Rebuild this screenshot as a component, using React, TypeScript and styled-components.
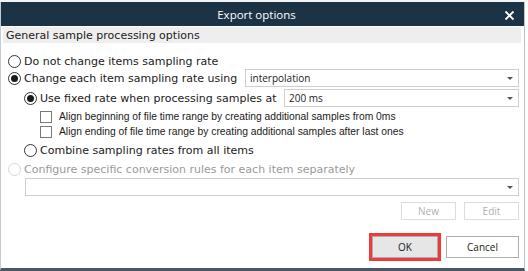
import React from "react";
import styled, { createGlobalStyle } from "styled-components";

const GlobalStyle = createGlobalStyle`
  html, body {
    margin: 0;
    padding: 0;
    background: #ffffff;
  }
  body {
    width: 528px;
    height: 271px;
    overflow: hidden;
    font-family: "DejaVu Sans", Verdana, sans-serif;
  }
`;

const Page = styled.div`
  width: 528px;
  height: 271px;
  display: flex;
  flex-direction: column;
  background: #ffffff;
`;

const BehindStrip = styled.div`
  height: 2px;
  background: #f4f4f4;
`;

const Window = styled.div`
  flex: 1;
  display: flex;
  flex-direction: column;
  width: 525px;
  border-left: 1px solid #c3ccd4;
  border-right: 1px solid #b9c2ca;
  border-bottom: 3px solid #4a5663;
  box-sizing: border-box;
`;

const TitleBar = styled.div`
  height: 24px;
  background: #1c3346;
  color: #ffffff;
  display: flex;
  align-items: center;
  justify-content: center;
  padding-right: 12px;
  position: relative;
  font-family: "Open Sans", "Noto Sans", sans-serif;
  font-size: 11.5px;
`;

const CloseButton = styled.div`
  position: absolute;
  right: 9px;
  top: 7px;
  width: 11px;
  height: 11px;
`;

const SectionHeader = styled.div`
  margin: 1px 3px 0 2px;
  height: 16px;
  background: #eeeeee;
  padding-left: 3px;
  display: flex;
  align-items: center;
  font-size: 11px;
  color: #1a1a1a;
`;

const Body = styled.div`
  flex: 1;
  display: flex;
  flex-direction: column;
  padding: 10px 5px 0 7px;
`;

const Row = styled.div<{ $indent?: number; $height?: number }>`
  display: flex;
  align-items: center;
  height: ${(p) => p.$height ?? 16}px;
  padding-left: ${(p) => p.$indent ?? 0}px;
`;

const Radio = styled.span<{ $checked?: boolean; $disabled?: boolean }>`
  width: 11px;
  height: 11px;
  border-radius: 50%;
  border: 1px solid ${(p) => (p.$disabled ? "#d5d5d5" : "#333333")};
  background: #ffffff;
  display: inline-flex;
  align-items: center;
  justify-content: center;
  flex-shrink: 0;
  margin-right: 3px;
  &::after {
    content: "";
    display: ${(p) => (p.$checked ? "block" : "none")};
    width: 7px;
    height: 7px;
    border-radius: 50%;
    background: #1a1a1a;
  }
`;

const Label = styled.span<{ $disabled?: boolean }>`
  font-size: 11px;
  color: ${(p) => (p.$disabled ? "#9a9a9a" : "#1a1a1a")};
  white-space: nowrap;
`;

const Checkbox = styled.span`
  width: 10px;
  height: 10px;
  border: 1px solid #7a7a7a;
  background: #ffffff;
  flex-shrink: 0;
  margin-right: 7px;
`;

const SmallLabel = styled.span`
  font-family: "Liberation Sans", Arial, sans-serif;
  font-size: 10.3px;
  color: #1a1a1a;
  white-space: nowrap;
`;

const Select = styled.div<{ $width: number }>`
  margin-left: auto;
  width: ${(p) => p.$width}px;
  height: 18px;
  box-sizing: border-box;
  border: 1px solid #cfcfcf;
  background: #ffffff;
  display: flex;
  align-items: center;
  padding-left: 4px;
  font-family: "Open Sans", "Noto Sans", sans-serif;
  font-size: 10px;
  color: #1a1a1a;
`;

const SelectText = styled.span`
  flex: 1;
`;

const Caret = styled.span`
  width: 16px;
  display: flex;
  justify-content: center;
  &::after {
    content: "";
    border-left: 3px solid transparent;
    border-right: 3px solid transparent;
    border-top: 3px solid #555555;
  }
`;

const ButtonRow = styled.div<{ $top: number }>`
  display: flex;
  justify-content: flex-end;
  gap: 8px;
  margin-top: ${(p) => p.$top}px;
`;

const Button = styled.div<{ $disabled?: boolean; $primary?: boolean }>`
  width: ${(p) => (p.$primary ? 66 : 73)}px;
  height: ${(p) => (p.$disabled ? 18 : 22)}px;
  box-sizing: border-box;
  display: flex;
  align-items: center;
  justify-content: center;
  font-family: "Open Sans", "Noto Sans", sans-serif;
  font-size: 10px;
  color: ${(p) => (p.$disabled ? "#b0b0b0" : "#1a1a1a")};
  background: ${(p) => (p.$primary ? "#e6e6e6" : "#ffffff")};
  border: 1px solid ${(p) => (p.$disabled ? "#dcdcdc" : "#adadad")};
  outline: ${(p) => (p.$primary ? "3px solid #ee3a3a" : "none")};
  outline-offset: 0px;
`;

const NarrowButton = styled(Button)`
  width: 55px;
`;

const App: React.FC = () => {
  return (
    <Page>
      <GlobalStyle />
      <BehindStrip />
      <Window>
        <TitleBar>
          Export options
          <CloseButton>
            <svg width="11" height="11" viewBox="0 0 11 11">
              <path
                d="M1.5 1.5 L9.5 9.5 M9.5 1.5 L1.5 9.5"
                stroke="#ffffff"
                strokeWidth="1.8"
              />
            </svg>
          </CloseButton>
        </TitleBar>
        <SectionHeader>General sample processing options</SectionHeader>
        <Body>
          <Row>
            <Radio />
            <Label>Do not change items sampling rate</Label>
          </Row>
          <Row $height={18}>
            <Radio $checked />
            <Label>Change each item sampling rate using</Label>
            <Select $width={274}>
              <SelectText>interpolation</SelectText>
              <Caret />
            </Select>
          </Row>
          <Row $indent={16} $height={22}>
            <Radio $checked />
            <Label>Use fixed rate when processing samples at</Label>
            <Select $width={235}>
              <SelectText>200 ms</SelectText>
              <Caret />
            </Select>
          </Row>
          <Row $indent={32} $height={15}>
            <Checkbox />
            <SmallLabel>
              Align beginning of file time range by creating additional samples from 0ms
            </SmallLabel>
          </Row>
          <Row $indent={32} $height={15}>
            <Checkbox />
            <SmallLabel>
              Align ending of file time range by creating additional samples after last ones
            </SmallLabel>
          </Row>
          <Row $indent={16} $height={22}>
            <Radio />
            <Label>Combine sampling rates from all items</Label>
          </Row>
          <Row $height={16}>
            <Radio $disabled />
            <Label $disabled>Configure specific conversion rules for each item separately</Label>
          </Row>
          <Row $indent={17} $height={20}>
            <Select $width={495}>
              <SelectText />
              <Caret />
            </Select>
          </Row>
          <ButtonRow $top={5}>
            <NarrowButton $disabled>New</NarrowButton>
            <NarrowButton $disabled>Edit</NarrowButton>
          </ButtonRow>
          <ButtonRow $top={16}>
            <Button $primary>OK</Button>
            <Button>Cancel</Button>
          </ButtonRow>
        </Body>
      </Window>
    </Page>
  );
};

export default App;
